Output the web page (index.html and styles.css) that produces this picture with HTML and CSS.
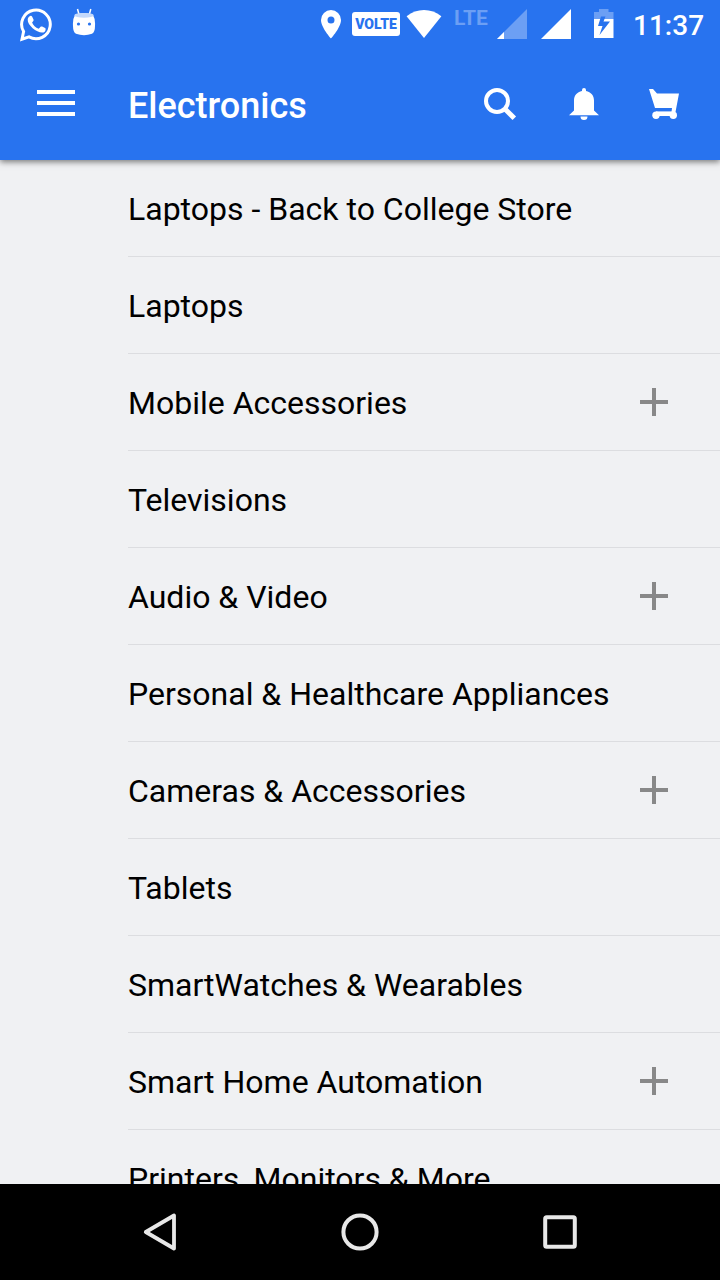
FILE: index.html
```
<!DOCTYPE html>
<html lang="en">
<head>
<meta charset="utf-8">
<title>Electronics</title>
<link rel="stylesheet" href="styles.css">
</head>
<body>
<div class="screen">
  <div class="status">
    <svg class="whatsapp" width="34" height="36" viewBox="0 0 34 36">
      <path d="M4.6 25.6A14.3 14.3 0 1 1 10 30.9L3 33.2Z" fill="none" stroke="#fff" stroke-width="3"/>
      <path d="M10.3 10.5C11.3 9.6 12.6 9.5 13.2 10.7L14.6 13.7C15 14.8 13.4 16 13.1 16.5C14.2 19.4 16.5 21.5 19.7 22.8L21.6 20.7C22 20.3 22.7 20.3 23.2 20.6L26.1 22.1C27 22.6 26.8 24.6 25.7 25.7C21.5 29.5 8.2 20.2 8.7 13.5C8.9 12.1 9.5 11.2 10.3 10.5Z" fill="#fff"/>
    </svg>
    <svg class="droid" width="24" height="28" viewBox="0 0 24 28">
      <path d="M5.500 1L7 6.500M18.800 1L17.300 6.500" stroke="#fff" stroke-width="1.500"/>
      <path d="M3 7Q12 3 21 7Q23.500 11 23 18Q23 24 20 25.800Q12 28.500 4 25.800Q1 24 1 18Q.5 11 3 7Z" fill="#fff"/>
      <ellipse cx="12" cy="7.300" rx="9.700" ry="2.400" fill="#c4d9fb"/>
      <circle cx="6.500" cy="16" r="1.600" fill="#2873ee"/>
      <circle cx="17.500" cy="16" r="1.600" fill="#2873ee"/>
    </svg>
    <svg class="pin" width="20" height="29" viewBox="0 0 20 29">
      <path fill="#fff" fill-rule="evenodd" d="M10 0A10 10 0 0 0 0 10C0 17.500 10 28.500 10 28.500S20 17.500 20 10A10 10 0 0 0 10 0ZM10 6.500A3.500 3.500 0 1 1 10 13.500A3.500 3.500 0 1 1 10 6.500Z"/>
    </svg>
    <span class="volte">VOLTE</span>
    <svg class="wifi" width="36" height="28" viewBox="0 0 36 28">
      <path d="M18 28L.6 6.300Q8.500 0 18 0T35.400 6.300Z" fill="#fff"/>
    </svg>
    <span class="lte">LTE</span>
    <svg class="signal-low" width="30" height="30" viewBox="0 0 30 30">
      <path d="M0 30L30 0V30Z" fill="#6c9ff4"/>
      <path d="M0 30L7 23V30Z" fill="#fff"/>
    </svg>
    <svg class="signal" width="30" height="30" viewBox="0 0 30 30"><path d="M0 30L30 0V30Z" fill="#fff"/></svg>
    <svg class="battery" width="20" height="29" viewBox="0 0 20 29">
      <path d="M0 10V3H5V0H14.500V3H19.500V10Z" fill="#6c9ff4"/>
      <path d="M0 10H19.500V29H0Z" fill="#fff"/>
      <path d="M7 7.500H11.500L9.500 12.500H16L5.500 26L8.500 17H4Z" fill="#2873ee"/>
    </svg>
    <span class="clock">11:37</span>
  </div>
  <header class="toolbar">
    <svg class="menu" width="38" height="28" viewBox="0 0 38 28"><path d="M0 2H38M0 13H38M0 24H38" stroke="#fff" stroke-width="4"/></svg>
    <h1 class="title">Electronics</h1>
    <svg class="search" width="33" height="33" viewBox="0 0 33 33">
      <circle cx="13" cy="13" r="11" fill="none" stroke="#fff" stroke-width="4"/>
      <path d="M20.500 20.500L30.300 30.300" stroke="#fff" stroke-width="5"/>
    </svg>
    <svg class="bell" width="30" height="33" viewBox="0 0 30 33">
      <path d="M0 27.300L5 22.500V12.500C5 7.500 8 4 13 3V2A2 2 0 0 1 17 2V3C22 4 25 7.500 25 12.500V22.500L30 27.300ZM11.500 28.500H18.500Q18.500 32 15 32T11.500 28.500Z" fill="#fff"/>
    </svg>
    <svg class="cart" width="31" height="31" viewBox="0 0 31 31">
      <path d="M0 0H4L8 4.500H30L26.500 23H22.500L23 19H6Z" fill="#fff"/>
      <path d="M7 22.400H24V27H7Z" fill="#fff"/>
      <circle cx="7" cy="26.200" r="3.700" fill="#fff"/>
      <circle cx="24.300" cy="26.200" r="3.700" fill="#fff"/>
    </svg>
  </header>
  <main class="list">
    <div class="row">Laptops - Back to College Store</div>
    <div class="row">Laptops</div>
    <div class="row">Mobile Accessories<i class="plus"></i></div>
    <div class="row">Televisions</div>
    <div class="row">Audio &amp; Video<i class="plus"></i></div>
    <div class="row">Personal &amp; Healthcare Appliances</div>
    <div class="row">Cameras &amp; Accessories<i class="plus"></i></div>
    <div class="row">Tablets</div>
    <div class="row">SmartWatches &amp; Wearables</div>
    <div class="row">Smart Home Automation<i class="plus"></i></div>
    <div class="row">Printers, Monitors &amp; More</div>
  </main>
  <nav class="navbar">
    <svg width="40" height="40" viewBox="0 0 40 40"><path d="M5.800 20L34 3.500V36.500Z" fill="none" stroke="#e8e8e8" stroke-width="3.800" stroke-linejoin="round"/></svg>
    <svg width="40" height="40" viewBox="0 0 40 40"><circle cx="20" cy="20" r="16.600" fill="none" stroke="#e8e8e8" stroke-width="4"/></svg>
    <svg width="40" height="40" viewBox="0 0 40 40"><rect x="5.200" y="5.200" width="29.600" height="29.600" rx="1.500" fill="none" stroke="#e8e8e8" stroke-width="4"/></svg>
  </nav>
</div>
</body>
</html>
```
FILE: styles.css
```
* { box-sizing: border-box; }
body { margin: 0; font-family: Roboto, "Noto Sans", sans-serif; }
svg { display: block; flex: none; }
.screen {
  width: 720px;
  height: 1280px;
  display: flex;
  flex-direction: column;
  overflow: hidden;
  background: #f0f1f3;
}
.status {
  flex: none;
  height: 50px;
  display: flex;
  align-items: flex-start;
  padding-left: 19px;
  background: #2873ef;
  color: #fff;
  z-index: 2;
}
.whatsapp { margin-top: 6px; }
.droid { margin: 8px 0 0 19px; }
.pin { margin: 9.500px 0 0 225px; }
.volte {
  width: 48px;
  height: 24px;
  margin: 12px 0 0 11px;
  border-radius: 3px;
  background: #fff;
  color: #2873ef;
  font: 900 14px/25px Roboto, sans-serif;
  text-align: center;
}
.wifi { margin: 10px 0 0 6px; }
.lte {
  width: 37px;
  margin: 5px 0 0 12px;
  color: #6c9ff4;
  font: 700 21px/26px Roboto, sans-serif;
}
.signal-low { margin: 9px 0 0 6px; }
.signal { margin: 9px 0 0 14px; }
.battery { margin: 9px 0 0 23px; }
.clock {
  margin: 8px 0 0 19px;
  font-size: 28px;
  font-weight: 500;
  line-height: 36px;
}
.toolbar {
  flex: none;
  height: 110px;
  display: flex;
  align-items: flex-start;
  padding-left: 37px;
  background: #2873ef;
  color: #fff;
  box-shadow: 0 2px 6px rgba(0, 0, 0, .5);
  z-index: 1;
}
.menu { margin-top: 40px; }
.title {
  width: 356px;
  margin: 35px 0 0 53px;
  font-size: 36px;
  font-weight: 500;
  line-height: 42px;
}
.search { margin-top: 38px; }
.bell { margin: 38px 0 0 52px; }
.cart { margin: 39px 0 0 50px; }
.list {
  flex: 1;
  min-height: 0;
  overflow: hidden;
  padding-left: 128px;
}
.row {
  height: 97px;
  display: flex;
  align-items: center;
  justify-content: space-between;
  padding: 2px 52px 0 0;
  border-bottom: 1px solid #dcdde0;
  color: #000;
  font-size: 32px;
  line-height: 38px;
  white-space: nowrap;
}
.plus {
  width: 28px;
  height: 28px;
  margin-top: -2px;
  background:
    linear-gradient(#888, #888) center / 28px 4px no-repeat,
    linear-gradient(#888, #888) center / 4px 28px no-repeat;
}
.navbar {
  flex: none;
  height: 96px;
  display: flex;
  justify-content: center;
  align-items: center;
  gap: 160px;
  background: #000;
}
```
